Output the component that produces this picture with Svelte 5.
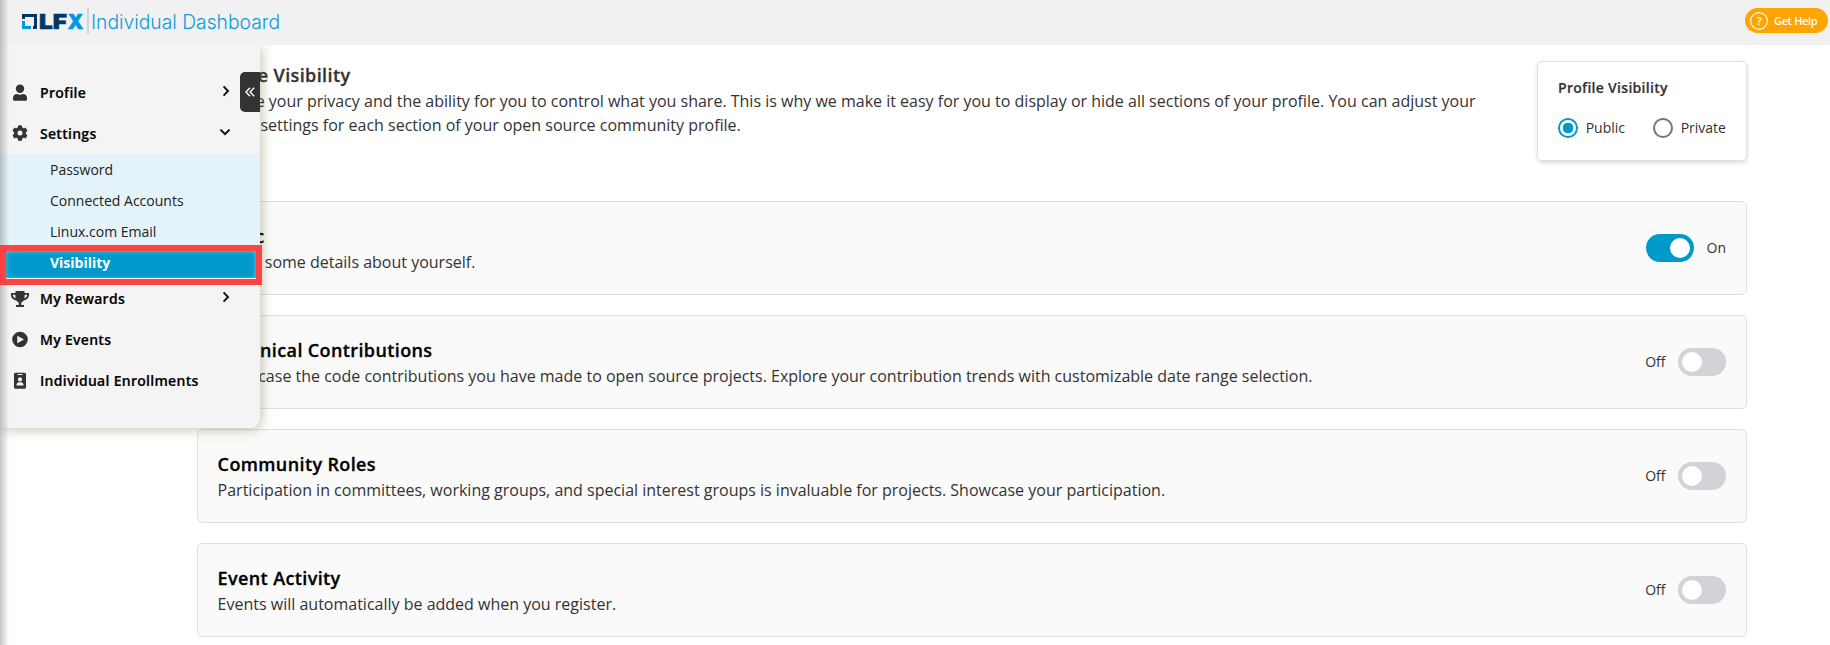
<script>
  const sub = ['Password', 'Connected Accounts', 'Linux.com Email', 'Visibility'];
  const sections = [
    { title: 'Basic', text: 'Share some details about yourself.', on: true },
    { title: 'Technical Contributions', text: 'Showcase the code contributions you have made to open source projects. Explore your contribution trends with customizable date range selection.', on: false },
    { title: 'Community Roles', text: 'Participation in committees, working groups, and special interest groups is invaluable for projects. Showcase your participation.', on: false },
    { title: 'Event Activity', text: 'Events will automatically be added when you register.', on: false }
  ];
</script>

{#snippet arrow(down)}
  <svg class="arrow" class:down width="14" height="14" viewBox="0 0 14 14"><path d="M4.6 2.4 9 7l-4.4 4.6" fill="none" stroke="#111" stroke-width="2" /></svg>
{/snippet}

<div class="page">
  <header>
    <svg class="logo" width="264" height="30" viewBox="0 0 264 30">
      <path d="M0 11V6h15v15h-4v-3h1V9H3v2z" fill="#003764" />
      <path d="M0 13h3v5h6v3H0z" fill="#0099e0" />
      <text x="17" y="21" font-family="Inter" font-weight="900" font-size="20.500" textLength="28" lengthAdjust="spacingAndGlyphs" stroke="#003764" stroke-width=".5" fill="#003764">LF</text>
      <text x="45.500" y="21" font-family="Inter" font-weight="900" font-size="20.500" textLength="16" lengthAdjust="spacingAndGlyphs" stroke="#0099e0" stroke-width=".4" fill="#0099e0">X</text>
      <path d="M66 0v26" stroke="#b9cbd8" stroke-width="1.500" />
      <text x="69" y="21" font-family="Inter" font-weight="300" font-size="20" textLength="189" lengthAdjust="spacingAndGlyphs" fill="#0c9bdc">Individual Dashboard</text>
    </svg>
    <button class="help">
      <svg width="18" height="18" viewBox="0 0 18 18"><circle cx="9" cy="9" r="8.400" fill="none" stroke="#fff" stroke-width="1.100" /><text x="9" y="12.700" text-anchor="middle" font-size="10.500" fill="#fff">?</text></svg>
      <span>Get Help</span>
    </button>
  </header>

  <main>
    <section class="intro">
      <div class="copy">
        <h2>Manage Visibility</h2>
        <p>We value your privacy and the ability for you to control what you share. This is why we make it easy for you to display or hide all sections of your profile. You can adjust your<br />visibility settings for each section of your open source community profile.</p>
      </div>
      <div class="choice">
        <h3>Profile Visibility</h3>
        <div class="radios">
          <span class="radio on"></span><span>Public</span>
          <span class="radio second"></span><span>Private</span>
        </div>
      </div>
    </section>
    {#each sections as s}
      <section class="card">
        <div>
          <h2>{s.title}</h2>
          <p>{s.text}</p>
        </div>
        <div class="control">
          {#if !s.on}<span class="state">Off</span>{/if}
          <span class="switch" class:on={s.on}></span>
          {#if s.on}<span class="state">On</span>{/if}
        </div>
      </section>
    {/each}
  </main>

  <nav>
    <div class="row">
      <svg class="icon" width="18" height="18" viewBox="0 0 18 18"><circle cx="9" cy="4.800" r="4.200" /><path d="M2 15.500V14C2 11.500 4 10 6 10c2 1 4 1 6 0 2 0 4 1.500 4 4v1.500q0 1.300-1.300 1.300H3.300Q2 16.800 2 15.500z" /></svg>
      <span>Profile</span>{@render arrow(false)}
    </div>
    <div class="row">
      <svg class="icon gear" width="16" height="16" viewBox="0 0 512 512"><path d="M487 316l-43-25a195 195 0 0 0 0-70l43-25c5-3 7-9 5-14-11-36-30-69-55-96-4-4-10-5-15-2l-42 25a189 189 0 0 0-61-35V24c0-6-4-11-9-12a255 255 0 0 0-110 0c-5 1-9 6-9 12v50a195 195 0 0 0-61 35L88 84c-5-3-11-2-15 2-25 27-44 60-55 96-2 5 0 11 5 14l43 25a195 195 0 0 0 0 70l-43 25c-5 3-7 9-5 14 11 36 30 69 55 96 4 4 10 5 15 2l42-25a189 189 0 0 0 61 35v50c0 6 4 11 9 12a255 255 0 0 0 110 0c5-1 9-6 9-12v-50a195 195 0 0 0 61-35l42 25c5 3 11 2 15-2 25-27 44-60 55-96 2-5 0-11-5-14zM256 336a80 80 0 1 1 0-160 80 80 0 0 1 0 160z" /></svg>
      <span>Settings</span>{@render arrow(true)}
    </div>
    <div class="submenu">
      {#each sub as item}
        <div class="item" class:active={item === 'Visibility'}>{item}</div>
      {/each}
      <div class="marker"></div>
    </div>
    <div class="row">
      <svg class="icon" width="18" height="18" viewBox="0 0 18 18"><path fill-rule="evenodd" d="M4.500 1h9v2H18v2c0 3-2.500 5-5.200 5.500C12 11.500 11 12.200 10.300 12.500V15H13v2H5v-2h2.700v-2.500c-.7-.3-1.700-1-2.500-2C2.500 10 0 8 0 5V3h4.500zM1.800 4.800C1.900 6.500 3 7.800 4.700 8.300 4.400 7 4.300 6 4.300 4.800zM13.700 4.800c0 1.200-.1 2.200-.4 3.500 1.700-.5 2.800-1.800 2.900-3.500z" /></svg>
      <span>My Rewards</span>{@render arrow(false)}
    </div>
    <div class="row">
      <svg class="icon" width="18" height="18" viewBox="0 0 18 18"><path fill-rule="evenodd" d="M9 .7a7.800 7.800 0 1 1 0 15.600A7.800 7.800 0 0 1 9 .7zM6.300 4.700v7.600L13 8.500z" /></svg>
      <span>My Events</span>
    </div>
    <div class="row">
      <svg class="icon" width="18" height="18" viewBox="0 0 18 18"><path fill-rule="evenodd" d="M4.500.7h9A1.500 1.500 0 0 1 15 2.200v13a1.500 1.500 0 0 1-1.500 1.500h-9A1.500 1.500 0 0 1 3 15.200v-13A1.500 1.500 0 0 1 4.500.7zM6.500 1.900v1.200h5V1.900zM9 5.300a2.100 2.100 0 1 0 0 4.200 2.100 2.100 0 0 0 0-4.200zM5.400 13.500h7.200c0-2-1-3.300-2.600-3.300H8c-1.600 0-2.600 1.300-2.600 3.300z" /></svg>
      <span>Individual Enrollments</span>
    </div>
    <button class="collapse" aria-label="Collapse menu">
      <svg width="10" height="10" viewBox="0 0 10 10"><path d="M5 .8.900 5 5 9.200M9.200.8 5.100 5l4.100 4.200" fill="none" stroke="#fff" stroke-width="1.400" /></svg>
    </button>
  </nav>
  <div class="edge"></div>
</div>

<style>
  :global(body) { overflow: hidden; background: #fff; }
  .page { position: relative; height: 645px; overflow: hidden; background: #fff; font-family: "Open Sans", sans-serif; color: #333; }
  h2, h3, p { margin: 0; }
  button { border: 0; padding: 0; font: inherit; }
  header { position: relative; z-index: 3; height: 45px; box-sizing: border-box; background: #f1f1f1; display: flex; justify-content: space-between; align-items: flex-start; padding: 8px 2px 0 22px; }
  .help { display: flex; align-items: center; gap: 6px; width: 83px; height: 25px; padding-left: 5px; border-radius: 13px; background: #ffa400; color: #fff; font-size: 11px; font-weight: 600; letter-spacing: -0.35px; white-space: nowrap; }
  main { padding: 16px 83px 0 197px; }
  .intro { display: flex; justify-content: space-between; height: 140px; }
  .copy { white-space: nowrap; }
  h2 { font-size: 18px; line-height: 28px; font-weight: 600; letter-spacing: .38px; -webkit-text-stroke: .3px currentColor; }
  p { font-size: 16px; line-height: 24px; }
  .choice { box-sizing: border-box; width: 210px; height: 100px; padding: 16px 20px; border: 1px solid #dee0e2; border-radius: 5px; box-shadow: 0 2px 4px rgba(0,0,0,.15); }
  h3 { font-size: 14px; line-height: 20px; font-weight: 600; letter-spacing: .29px; -webkit-text-stroke: .2px currentColor; }
  .radios { display: flex; align-items: center; margin-top: 20px; font-size: 14px; line-height: 20px; }
  .radio { box-sizing: border-box; width: 20px; height: 20px; border: 2px solid #757575; border-radius: 50%; margin-right: 8px; }
  .radio.on { border-color: #09c; background: radial-gradient(circle, #09c 5px, #fff 5.600px); }
  .radio.second { margin-left: 28px; }
  .card { box-sizing: border-box; height: 94px; margin-bottom: 20px; padding: 20px 20px 18px 19.600px; border: 1px solid #dedfe0; border-radius: 5px; background: #fafafa; display: flex; justify-content: space-between; white-space: nowrap; }
  .card h2 { color: #000; }
  .control { display: flex; align-items: center; gap: 12.500px; height: 52px; font-size: 14px; line-height: 20px; }
  .state { padding-bottom: 1px; }
  .switch { width: 48px; height: 28px; border-radius: 14px; background: #d3d2d8; display: flex; align-items: center; box-sizing: border-box; padding: 0 4px; }
  .switch::after { content: ""; width: 20px; height: 20px; border-radius: 50%; background: #fff; }
  .switch.on { background: #09c; justify-content: flex-end; }
  nav { position: absolute; left: 0; top: 45px; width: 260px; height: 383px; box-sizing: border-box; padding-top: 27px; background: #f4f4f4; border-radius: 0 0 10px 0; box-shadow: 2px 2px 12px rgba(80,80,20,.32); }
  .row { height: 41px; display: flex; align-items: center; padding: 0 27px 0 11px; font-size: 14px; font-weight: 600; letter-spacing: .29px; color: #000; }
  .row span { margin-left: 11px; -webkit-text-stroke: .2px currentColor; }
  .icon { fill: #333; }
  .gear { margin: -2px 1px 0; }
  .arrow { margin-left: auto; margin-top: -3px; }
  .down { transform: rotate(90deg); margin-right: 1px; }
  .submenu { position: relative; background: #e4f3f9; }
  .item { height: 31px; line-height: 31px; padding-left: 50px; font-size: 14px; color: #222; }
  .active { background: #09c; color: #fff; font-weight: 700; }
  .marker { position: absolute; z-index: 5; left: 0; top: 91px; width: 262px; height: 40px; box-sizing: border-box; border: 6px solid #ff4242; box-shadow: inset 0 0 5px rgba(255,255,255,.45); }
  .collapse { position: absolute; left: 240px; top: 27px; width: 20px; height: 40px; border-radius: 5px 0 0 5px; background: #333; display: grid; place-items: center; }
  .edge { position: absolute; z-index: 4; left: 0; top: 0; width: 9px; height: 100%; background: linear-gradient(90deg, rgba(0,0,0,.22), rgba(0,0,0,0)); }
</style>
